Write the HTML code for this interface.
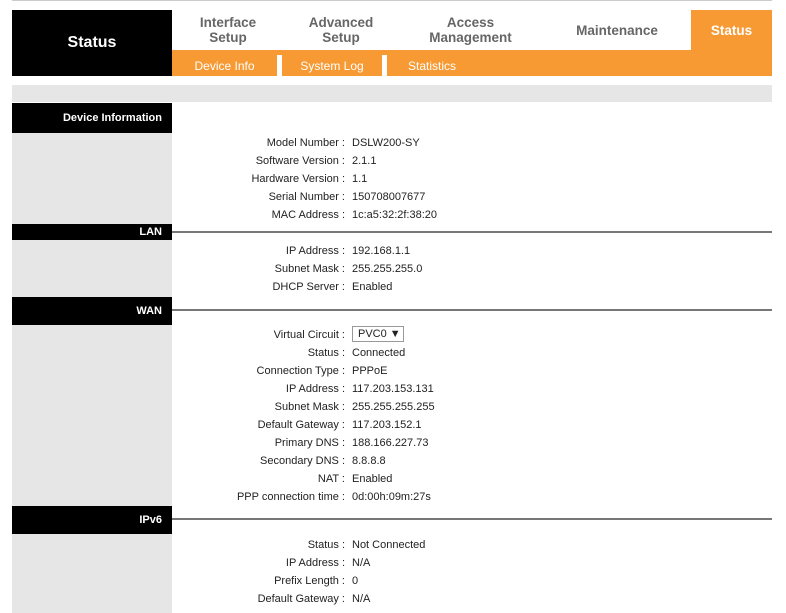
<!DOCTYPE html><html><head><style>
body{margin:0;width:786px;height:606px;background:#fff;font-family:"Liberation Sans",Arial,sans-serif;position:relative;overflow:hidden}
div{position:absolute}
.tab{top:10px;height:40px;color:#666;font-weight:bold;font-size:13.5px;text-align:center;line-height:15px;display:flex;align-items:center;justify-content:center}
.sub{top:50px;height:26px;line-height:32px;color:#fff;font-size:12px;text-align:center}
.hd{left:12px;width:160px;background:#000;color:#fff;font-weight:bold;font-size:11px;text-align:right;box-sizing:border-box;padding-right:10px}
.ln{left:172px;width:600px;height:2px;background:#777}
.r{left:172px;width:600px;height:18px;font-size:11px;color:#222;line-height:18px}
.r span{position:absolute;right:427px;white-space:nowrap}
.r b{font-weight:normal;position:absolute;left:180px;white-space:nowrap}
</style></head><body>
<div style="left:12px;top:0;width:760px;height:1px;background:#ccc"></div>
<div style="left:12px;top:10px;width:160px;height:66px;background:#000;color:#fff;font-weight:bold;font-size:16px;line-height:66px;text-align:center">Status</div>
<div class="tab" style="left:172px;width:112px">Interface<br>Setup</div>
<div class="tab" style="left:284px;width:114px">Advanced<br>Setup</div>
<div class="tab" style="left:398px;width:145px">Access<br>Management</div>
<div class="tab" style="left:543px;width:148px">Maintenance</div>
<div class="tab" style="left:691px;width:81px;background:#f89a34;color:#fff;height:40px">Status</div>
<div style="left:172px;top:50px;width:600px;height:26px;background:#f89a34"></div>
<div style="left:277px;top:55px;width:5px;height:21px;background:#fff"></div>
<div style="left:382px;top:55px;width:5px;height:21px;background:#fff"></div>
<div class="sub" style="left:172px;width:105px">Device Info</div>
<div class="sub" style="left:282px;width:100px">System Log</div>
<div class="sub" style="left:387px;width:90px">Statistics</div>
<div style="left:12px;top:85px;width:760px;height:17px;background:#e6e6e6"></div>
<div style="left:12px;top:103px;width:160px;height:510px;background:#e6e6e6"></div>
<div class="hd" style="top:103px;height:30px;line-height:30px">Device Information</div>
<div class="hd" style="top:224px;height:16px;line-height:16px">LAN</div><div class="ln" style="top:231px"></div>
<div class="hd" style="top:297px;height:28px;line-height:28px">WAN</div><div class="ln" style="top:309px"></div>
<div class="hd" style="top:506px;height:28px;line-height:28px">IPv6</div><div class="ln" style="top:518px"></div>
<div class="r" style="top:134px"><span>Model Number :</span><b>DSLW200-SY</b></div>
<div class="r" style="top:152px"><span>Software Version :</span><b>2.1.1</b></div>
<div class="r" style="top:170px"><span>Hardware Version :</span><b>1.1</b></div>
<div class="r" style="top:188px"><span>Serial Number :</span><b>150708007677</b></div>
<div class="r" style="top:206px"><span>MAC Address :</span><b>1c:a5:32:2f:38:20</b></div>
<div class="r" style="top:242px"><span>IP Address :</span><b>192.168.1.1</b></div>
<div class="r" style="top:260px"><span>Subnet Mask :</span><b>255.255.255.0</b></div>
<div class="r" style="top:278px"><span>DHCP Server :</span><b>Enabled</b></div>
<div class="r" style="top:326px"><span>Virtual Circuit :</span><b style="left:180px;top:0px;height:16px;line-height:15px;border:1px solid #999;padding-left:5px;box-sizing:border-box;width:52px">PVC0 &#9660;</b></div>
<div class="r" style="top:344px"><span>Status :</span><b>Connected</b></div>
<div class="r" style="top:362px"><span>Connection Type :</span><b>PPPoE</b></div>
<div class="r" style="top:380px"><span>IP Address :</span><b>117.203.153.131</b></div>
<div class="r" style="top:398px"><span>Subnet Mask :</span><b>255.255.255.255</b></div>
<div class="r" style="top:416px"><span>Default Gateway :</span><b>117.203.152.1</b></div>
<div class="r" style="top:434px"><span>Primary DNS :</span><b>188.166.227.73</b></div>
<div class="r" style="top:452px"><span>Secondary DNS :</span><b>8.8.8.8</b></div>
<div class="r" style="top:470px"><span>NAT :</span><b>Enabled</b></div>
<div class="r" style="top:488px"><span>PPP connection time :</span><b>0d:00h:09m:27s</b></div>
<div class="r" style="top:536px"><span>Status :</span><b>Not Connected</b></div>
<div class="r" style="top:554px"><span>IP Address :</span><b>N/A</b></div>
<div class="r" style="top:572px"><span>Prefix Length :</span><b>0</b></div>
<div class="r" style="top:590px"><span>Default Gateway :</span><b>N/A</b></div>
</body></html>
